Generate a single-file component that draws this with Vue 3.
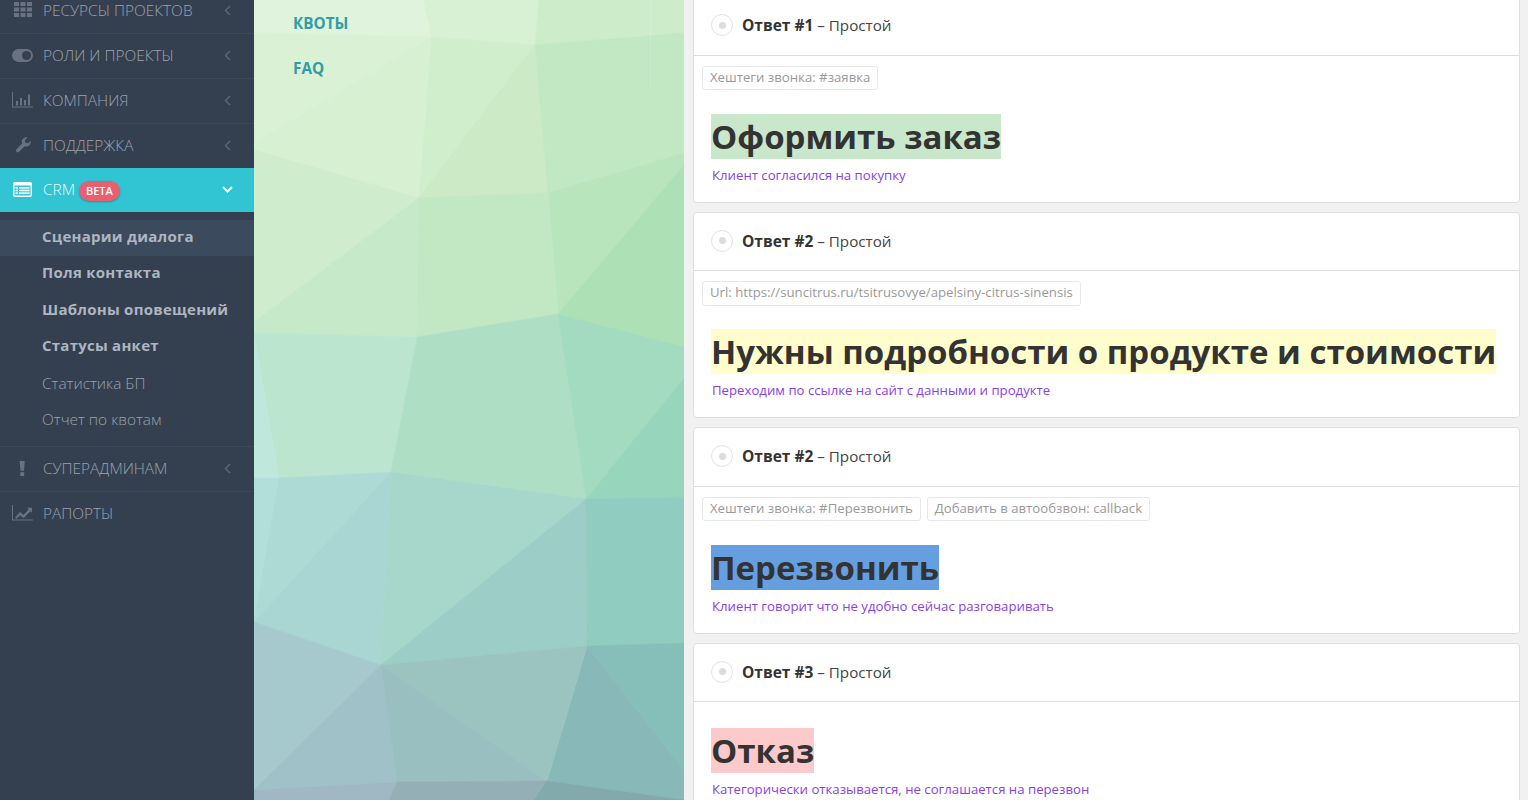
<script setup>
const menuTop = [
  { id: "grid", label: "РЕСУРСЫ ПРОЕКТОВ" },
  { id: "toggle", label: "РОЛИ И ПРОЕКТЫ" },
  { id: "bars", label: "КОМПАНИЯ" },
  { id: "wrench", label: "ПОДДЕРЖКА" },
];

const subMenu = [
  { label: "Сценарии диалога", bold: true, active: true },
  { label: "Поля контакта", bold: true },
  { label: "Шаблоны оповещений", bold: true },
  { label: "Статусы анкет", bold: true },
  { label: "Статистика БП" },
  { label: "Отчет по квотам" },
];

const answers = [
  {
    num: 1,
    tags: ["Хештеги звонка: #заявка"],
    title: "Оформить заказ",
    color: "#c9e7cb",
    note: "Клиент согласился на покупку",
  },
  {
    num: 2,
    tags: ["Url: https://suncitrus.ru/tsitrusovye/apelsiny-citrus-sinensis"],
    title: "Нужны подробности о продукте и стоимости",
    color: "#fffdcb",
    note: "Переходим по ссылке на сайт с данными и продукте",
  },
  {
    num: 2,
    tags: ["Хештеги звонка: #Перезвонить", "Добавить в автообзвон: callback"],
    title: "Перезвонить",
    color: "#659fdf",
    note: "Клиент говорит что не удобно сейчас разговаривать",
  },
  {
    num: 3,
    tags: [],
    title: "Отказ",
    color: "#fccaca",
    note: "Категорически отказывается, не соглашается на перезвон",
  },
];

// background facets: points in a 430x800 box, colour
const facets = [
  ["0,0 170,0 178,37 0,33", "#e0f3dc"],
  ["170,0 202,0 285,0 281,45 178,37", "#d8f0d4"],
  ["285,0 430,0 430,33 281,45", "#cdecc9"],
  ["0,33 178,37 0,143", "#daf1d5"],
  ["178,37 165,198 0,150 0,143", "#d6f0d1"],
  ["178,37 281,45 165,198", "#d0eecb"],
  ["281,45 294,193 165,198", "#cbeac5"],
  ["281,45 430,33 430,153 294,193", "#c2e8c3"],
  ["294,193 430,153 430,165 304,314", "#b9e5bd"],
  ["430,165 430,347 304,314", "#aee0b5"],
  ["0,150 165,198 0,322", "#cfedcd"],
  ["165,198 163,337 0,333 0,322", "#c6e9c9"],
  ["165,198 294,193 304,314 163,337", "#c2e7c3"],
  ["0,333 163,337 137,472 25,478", "#bbe5cf"],
  ["163,337 304,314 332,499 137,472", "#aedfc4"],
  ["304,314 430,347 430,378 332,499", "#a2dbbf"],
  ["430,378 430,497 332,499", "#97d6bc"],
  ["0,333 25,478 0,478", "#bfe7dc"],
  ["0,478 25,478 0,622", "#b3dfdb"],
  ["25,478 137,472 0,622", "#aedad6"],
  ["137,472 127,665 0,622", "#a9d6d2"],
  ["137,472 332,499 127,665", "#a7d6cb"],
  ["332,499 333,646 127,665", "#9ccdc6"],
  ["332,499 430,497 430,643 333,646", "#90cdc0"],
  ["333,646 430,643 430,770", "#86bfba"],
  ["333,646 430,770 430,800 293,781", "#89b8b8"],
  ["0,622 127,665 0,790", "#a6c9cd"],
  ["127,665 143,782 0,790", "#a0c1c8"],
  ["127,665 333,646 293,781", "#9bc4c1"],
  ["127,665 293,781 143,782", "#9abfc1"],
  ["0,790 143,782 135,800 0,800", "#9fb8c3"],
  ["143,782 293,781 280,800 135,800", "#95afb6"],
  ["293,781 430,800 280,800", "#82a9ac"],
];
</script>

<template>
  <div class="page">
    <!-- Sidebar -->
    <aside class="sidebar">
      <a v-for="item in menuTop" :key="item.id" class="menu-row">
        <span class="menu-icon">
          <svg v-if="item.id === 'grid'" width="18" height="16" viewBox="0 0 18 16" fill="currentColor">
            <rect x="0" y="0" width="5" height="4" /><rect x="6.5" y="0" width="5" height="4" /><rect x="13" y="0" width="5" height="4" />
            <rect x="0" y="5.5" width="5" height="4" /><rect x="6.5" y="5.5" width="5" height="4" /><rect x="13" y="5.5" width="5" height="4" />
            <rect x="0" y="11" width="5" height="4" /><rect x="6.5" y="11" width="5" height="4" /><rect x="13" y="11" width="5" height="4" />
          </svg>
          <svg v-else-if="item.id === 'toggle'" width="21" height="13" viewBox="0 0 21 13">
            <rect x="0" y="0" width="21" height="13" rx="6.5" fill="currentColor" />
            <circle cx="14.5" cy="6.5" r="4.6" fill="#343f4f" />
          </svg>
          <svg v-else-if="item.id === 'bars'" width="21" height="16" viewBox="0 0 21 16" fill="currentColor">
            <rect x="0" y="0" width="1" height="15" /><rect x="0" y="14.5" width="21" height="1" />
            <rect x="4" y="9" width="2" height="4.5" /><rect x="8" y="6" width="2" height="7.5" />
            <rect x="12" y="8" width="2" height="5.5" /><rect x="16" y="2.5" width="2" height="11" />
          </svg>
          <svg v-else width="18" height="18" viewBox="0 0 20 20" fill="currentColor">
            <path d="M18.5 5.2a5 5 0 0 1-6.6 6.1L5.6 17.6a2 2 0 0 1-2.9-2.9L9 8.4A5 5 0 0 1 15 1.6L12 4.6l.6 2.9 2.9.6z" />
          </svg>
        </span>
        <span class="menu-label">{{ item.label }}</span>
        <svg class="chev" width="7" height="11" viewBox="0 0 7 11" fill="none" stroke="currentColor" stroke-width="1.4">
          <path d="M6 1 1.5 5.5 6 10" />
        </svg>
      </a>

      <a class="menu-row crm">
        <span class="menu-icon">
          <svg width="19" height="15" viewBox="0 0 19 15">
            <rect x="0" y="0" width="19" height="15" rx="2" fill="#fff" />
            <rect x="1.5" y="3.5" width="16" height="10" fill="#31c4d3" />
            <rect x="2.5" y="5" width="2.5" height="1.6" fill="#fff" /><rect x="6" y="5" width="10.5" height="1.6" fill="#fff" />
            <rect x="2.5" y="7.7" width="2.5" height="1.6" fill="#fff" /><rect x="6" y="7.7" width="10.5" height="1.6" fill="#fff" />
            <rect x="2.5" y="10.4" width="2.5" height="1.6" fill="#fff" /><rect x="6" y="10.4" width="10.5" height="1.6" fill="#fff" />
          </svg>
        </span>
        <span class="crm-label">CRM</span>
        <span class="beta">BETA</span>
        <svg class="chev down" width="11" height="7" viewBox="0 0 11 7" fill="none" stroke="currentColor" stroke-width="2">
          <path d="M1 1l4.5 4.5L10 1" />
        </svg>
      </a>

      <div class="submenu">
        <a
          v-for="sub in subMenu"
          :key="sub.label"
          class="sub-row"
          :class="{ bold: sub.bold, active: sub.active }"
        >{{ sub.label }}</a>
      </div>

      <a class="menu-row top-line">
        <span class="menu-icon">
          <svg width="7" height="15" viewBox="0 0 7 15" fill="currentColor">
            <path d="M.6 0h5.2L5 9.8H1.5zM1.3 11.2h3.9V15H1.3z" />
          </svg>
        </span>
        <span class="menu-label">СУПЕРАДМИНАМ</span>
        <svg class="chev" width="7" height="11" viewBox="0 0 7 11" fill="none" stroke="currentColor" stroke-width="1.4">
          <path d="M6 1 1.5 5.5 6 10" />
        </svg>
      </a>
      <a class="menu-row plain">
        <span class="menu-icon">
          <svg width="21" height="16" viewBox="0 0 21 16" fill="currentColor">
            <rect x="0" y="0" width="1" height="15" /><rect x="0" y="14.5" width="21" height="1" />
            <path d="M3 12.5 8 7l3.5 3L16.6 4.4 15 2.8h5v5l-1.6-1.6-6.8 7-3.6-3-3.6 3.8z" />
          </svg>
        </span>
        <span class="menu-label">РАПОРТЫ</span>
      </a>
    </aside>

    <!-- Polygon panel -->
    <section class="poly-panel">
      <svg class="poly-bg" viewBox="0 0 430 800" preserveAspectRatio="none">
        <polygon
          v-for="(f, i) in facets"
          :key="i"
          :points="f[0]"
          :fill="f[1]"
          :stroke="f[1]"
          stroke-width="0.6"
        />
      </svg>
      <span class="poly-line"></span>
      <nav class="poly-links">
        <a>КВОТЫ</a>
        <a>FAQ</a>
      </nav>
    </section>

    <!-- Answers -->
    <main class="answers">
      <div v-for="(a, i) in answers" :key="i" class="card">
        <div class="card-head">
          <span class="radio"><i></i></span>
          <span class="head-text"><b>Ответ #{{ a.num }}</b> – Простой</span>
        </div>
        <div class="card-body" :class="{ 'no-tags': !a.tags.length }">
          <div v-if="a.tags.length" class="tags">
            <span v-for="t in a.tags" :key="t" class="tag">{{ t }}</span>
          </div>
          <h2 class="title"><span :style="{ background: a.color }">{{ a.title }}</span></h2>
          <p class="note">{{ a.note }}</p>
        </div>
      </div>
    </main>
  </div>
</template>

<style>
html,
body {
  margin: 0;
  overflow: hidden;
}
</style>

<style scoped>
.page {
  display: flex;
  height: 800px;
  overflow: hidden;
  font-family: "Open Sans", "Noto Sans", sans-serif;
  background: #f1f1f1;
}

/* sidebar */
.sidebar {
  flex: 0 0 254px;
  height: 811px;
  margin-top: -11px;
  background: #343f4f;
  color: #9aa2ae;
}
.menu-row {
  display: flex;
  align-items: center;
  height: 42px;
  padding-bottom: 2px;
  border-bottom: 1px solid #3d4858;
  font-size: 15.4px;
  font-weight: 300;
}
.menu-row.plain {
  border-bottom: 0;
}
.menu-row.top-line {
  border-top: 1px solid #3d4858;
}
.menu-icon {
  flex: 0 0 43px;
  display: flex;
  justify-content: center;
  padding-left: 2px;
  box-sizing: border-box;
  width: 43px;
  color: #687280;
}
.menu-label {
  flex: 1;
}
.chev {
  margin-right: 23px;
  color: #5d6776;
}
.crm {
  margin-top: -1px;
  border-bottom: 0;
  background: #31c4d3;
  color: #e6f8fa;
}
.crm .menu-icon {
  color: #fff;
}
.crm-label {
  margin-right: 4px;
}
.beta {
  margin-top: 4px;
  padding: 3px 7px;
  border-radius: 10px;
  background: #e8606f;
  box-shadow: 0 1px 2px rgba(0, 0, 0, 0.25);
  color: #fff;
  font-size: 11px;
  font-weight: 600;
  line-height: 14px;
}
.chev.down {
  margin-left: auto;
  margin-right: 21px;
  color: #fff;
}
.submenu {
  padding: 8px 0 8px;
}
.sub-row {
  display: block;
  height: 36.4px;
  padding-left: 42px;
  font-size: 15.4px;
  font-weight: 300;
  line-height: 36px;
  color: #9aa2ae;
}
.sub-row.bold {
  font-size: 15px;
  font-weight: 700;
  letter-spacing: 0.25px;
  line-height: 33px;
  color: #aeb6c1;
}
.sub-row.active {
  background: #3c4a5d;
}

/* polygon panel */
.poly-panel {
  position: relative;
  flex: 0 0 430px;
  height: 800px;
}
.poly-bg {
  position: absolute;
  inset: 0;
  width: 100%;
  height: 100%;
}
.poly-line {
  position: absolute;
  top: 0;
  left: 396px;
  width: 1px;
  height: 88px;
  background: rgba(255, 255, 255, 0.15);
}
.poly-links {
  position: relative;
  display: flex;
  flex-direction: column;
  gap: 25px;
  padding: 13px 0 0 39px;
  font-size: 15.3px;
  font-weight: 700;
  line-height: 20px;
  color: #2f9ea3;
}

/* answer cards */
.answers {
  flex: 1;
  min-width: 0;
  margin-top: -3.75px;
  padding: 0 8.5px 0 9px;
}
.card {
  box-sizing: border-box;
  height: 206.5px;
  margin-bottom: 9px;
  border: 1px solid #dedede;
  border-radius: 4px;
  background: #fff;
  color: #333;
}
.card-head {
  display: flex;
  align-items: center;
  gap: 9px;
  box-sizing: border-box;
  height: 58.5px;
  padding: 0 0 2px 17px;
  border-bottom: 1px solid #dedede;
}
.radio {
  display: flex;
  align-items: center;
  justify-content: center;
  box-sizing: border-box;
  width: 22px;
  height: 22px;
  border: 1px solid #e2e2e2;
  border-radius: 50%;
}
.radio i {
  width: 7px;
  height: 7px;
  border-radius: 50%;
  background: #dcdcdc;
}
.head-text {
  font-size: 15.2px;
  line-height: 20px;
  color: #444;
}
.head-text b {
  font-size: 15.5px;
  color: #333;
}
.card-body {
  padding: 9.75px 8px 0;
}
.card-body.no-tags {
  padding-top: 26px;
}
.tags {
  display: flex;
  gap: 6px;
  margin-bottom: 23.75px;
}
.tag {
  box-sizing: border-box;
  height: 24.5px;
  padding: 0 7px;
  border: 1px solid #e8e8e8;
  border-radius: 3px;
  font-size: 13.2px;
  line-height: 21.5px;
  color: #999;
}
.title {
  margin: 0 0 0 9px;
  font-size: 33px;
  font-weight: 700;
  line-height: 45px;
  color: #333;
}
.title span {
  display: inline-block;
}
.note {
  margin: 6.75px 0 0 10px;
  font-size: 13.2px;
  line-height: 18px;
  color: #8a3fe0;
}
</style>
